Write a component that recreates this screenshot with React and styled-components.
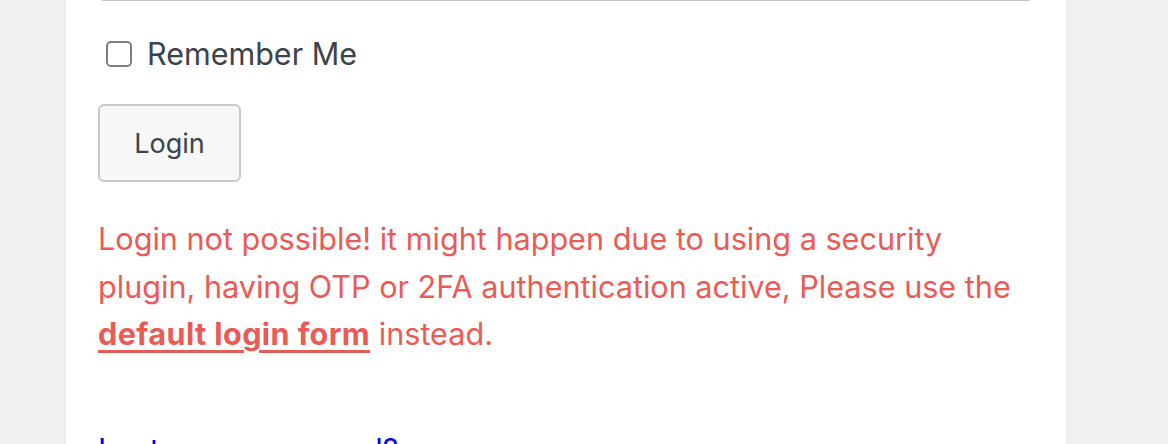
import React from "react";
import styled, { createGlobalStyle } from "styled-components";

const GlobalStyle = createGlobalStyle`
	html, body {
		margin: 0;
		padding: 0;
		background: #f0f0f1;
		font-family: Inter, "Noto Sans", "Liberation Sans", sans-serif;
	}
`;

const Page = styled.div`
	width: 1168px;
	height: 444px;
	overflow: hidden;
	padding-left: 66px;
	box-sizing: border-box;
`;

const Card = styled.div`
	width: 1000px;
	background: #fff;
	box-shadow: 0 1px 3px rgba(0, 0, 0, 0.08);
	padding: 0 32px 40px;
	box-sizing: border-box;
`;

const FieldWrap = styled.div`
	margin-top: -59px;
`;

const TextInput = styled.input`
	display: block;
	width: 100%;
	height: 60px;
	box-sizing: border-box;
	border: 1px solid #c3c4c7;
	border-radius: 6px;
	background: #fff;
	outline: none;
`;

const RememberRow = styled.label`
	display: flex;
	align-items: center;
	gap: 15px;
	margin: 36px 0 0 8px;
	font-size: 30.5px;
	line-height: 34px;
	color: #3c434a;
`;

const Check = styled.span`
	width: 26px;
	height: 26px;
	box-sizing: border-box;
	border: 2px solid #7b7e83;
	border-radius: 5px;
	background: #fff;
	flex-shrink: 0;
`;

const LoginButton = styled.button`
	display: block;
	margin-top: 33px;
	width: 143px;
	height: 78px;
	border: 2px solid #c8c9cc;
	border-radius: 6px;
	background: #f6f7f7;
	font-family: inherit;
	font-size: 27px;
	color: #3c434a;
	cursor: pointer;
`;

const Notice = styled.p`
	margin: 33px 0 0;
	font-size: 30.6px;
	line-height: 47.5px;
	color: #eb5b55;
`;

const NoticeLink = styled.a`
	color: inherit;
	font-weight: 700;
	letter-spacing: 0.4px;
	text-decoration: underline;
	text-underline-offset: 5px;
	text-decoration-thickness: 3px;
`;

const LostLink = styled.a`
	display: block;
	margin-top: 75px;
	font-size: 30.6px;
	line-height: 34px;
	color: #0000ee;
	text-decoration: none;
`;

export default function App() {
	return (
		<>
			<GlobalStyle />
			<Page>
				<Card>
					<FieldWrap>
						<TextInput type="password" aria-label="Password" />
					</FieldWrap>
					<RememberRow>
						<Check />
						Remember Me
					</RememberRow>
					<LoginButton>Login</LoginButton>
					<Notice>
						Login not possible! it might happen due to using a security
						plugin, having OTP or 2FA authentication active, Please use the{" "}
						<NoticeLink href="#">default login form</NoticeLink> instead.
					</Notice>
					<LostLink href="#">Lost your password?</LostLink>
				</Card>
			</Page>
		</>
	);
}
